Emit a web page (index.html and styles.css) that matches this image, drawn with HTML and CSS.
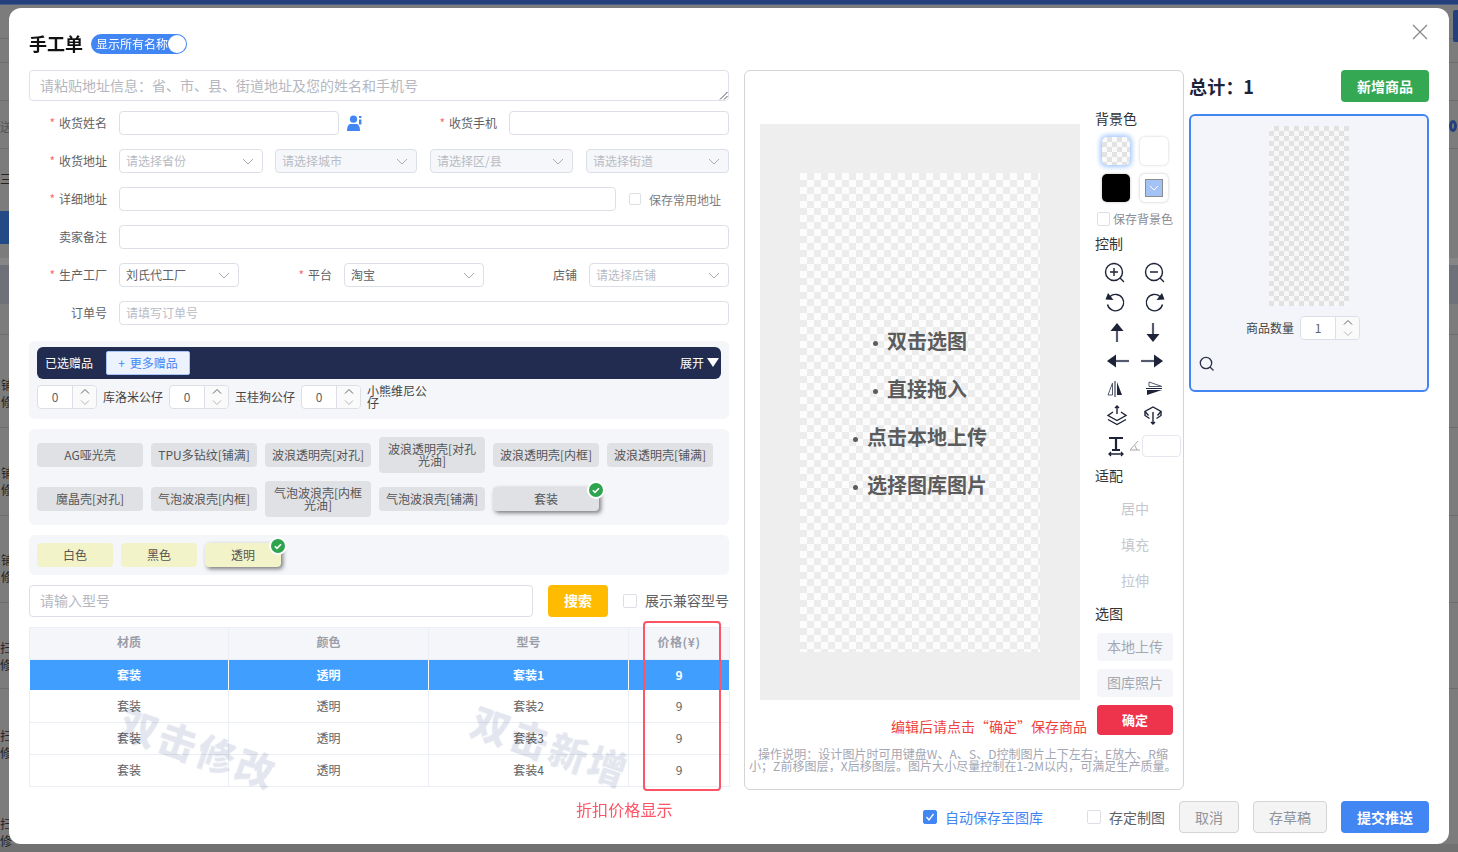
FILE: index.html
```html
<!DOCTYPE html>
<html lang="zh-CN">
<head>
<meta charset="utf-8">
<title>手工单</title>
<link rel="stylesheet" href="styles.css">
</head>
<body>
<div class="backdrop">
  <div class="bd-top"></div>
  <div class="bd-navy"></div>
  <div class="bd-band"></div>
  <div class="bd-line l1"></div><div class="bd-line l2"></div><div class="bd-line l3"></div><div class="bd-line l4"></div><div class="bd-line l5"></div><div class="bd-line l6"></div><div class="bd-line l7"></div><div class="bd-line l8"></div><div class="bd-line l9"></div>
  <span class="bd-txt t0">送</span><span class="bd-txt t00">三</span>
  <span class="bd-txt t1">铺<br>修</span><span class="bd-txt t2">铺<br>修</span><span class="bd-txt t3">铺<br>修</span>
  <span class="bd-txt t4">扫<br>修</span><span class="bd-txt t5">扫<br>修</span><span class="bd-txt t6">扫<br>修</span>
  <div class="bd-r-btn"></div><div class="bd-gear"></div>
</div>

<div class="modal">
  <header class="modal-head">
    <h1 class="title">手工单</h1>
    <div class="toggle"><span>显示所有名称</span><i class="knob"></i></div>
    <svg class="close" width="16" height="16" viewBox="0 0 16 16"><path d="M1 1l14 14M15 1L1 15" stroke="#8a8a8a" stroke-width="1.3" fill="none"/></svg>
  </header>

  <div class="modal-body">
    <section class="col-left">
      <div class="textarea">请粘贴地址信息：省、市、县、街道地址及您的姓名和手机号
        <svg class="grip" width="9" height="9" viewBox="0 0 9 9"><path d="M1 8.5L8.5 1M5 8.5L8.5 5" stroke="#555" stroke-width="1" fill="none"/></svg>
      </div>

      <div class="rows">
        <div class="row">
          <label class="lbl req">收货姓名</label>
          <div class="input w220"></div>
          <svg class="user-ic" width="16" height="16" viewBox="0 0 16 16"><circle cx="6.5" cy="4.2" r="3.6" fill="#4286f4"/><path d="M0 16c0-1 0-6 3-7h7c3 1 3 6 3 7z" fill="#4286f4"/><rect x="12" y="1" width="2.4" height="2" fill="#4286f4"/><rect x="12" y="4.5" width="2.4" height="5" fill="#4286f4"/></svg>
          <label class="lbl req w-phone">收货手机</label>
          <div class="input grow"></div>
        </div>
        <div class="row">
          <label class="lbl req">收货地址</label>
          <div class="select w144">请选择省份<svg class="chev" viewBox="0 0 12 7"><path d="M1 1l5 5 5-5" /></svg></div>
          <div class="select off w142 ml12">请选择城市<svg class="chev" viewBox="0 0 12 7"><path d="M1 1l5 5 5-5" /></svg></div>
          <div class="select off w143 ml13">请选择区/县<svg class="chev" viewBox="0 0 12 7"><path d="M1 1l5 5 5-5" /></svg></div>
          <div class="select off w143 ml13">请选择街道<svg class="chev" viewBox="0 0 12 7"><path d="M1 1l5 5 5-5" /></svg></div>
        </div>
        <div class="row">
          <label class="lbl req">详细地址</label>
          <div class="input w497"></div>
          <span class="check ml13"></span>
          <span class="chk-text ml8">保存常用地址</span>
        </div>
        <div class="row">
          <label class="lbl">卖家备注</label>
          <div class="input grow"></div>
        </div>
        <div class="row">
          <label class="lbl req">生产工厂</label>
          <div class="select val w120">刘氏代工厂<svg class="chev" viewBox="0 0 12 7"><path d="M1 1l5 5 5-5" /></svg></div>
          <label class="lbl req w-plat">平台</label>
          <div class="select val w140">淘宝<svg class="chev" viewBox="0 0 12 7"><path d="M1 1l5 5 5-5" /></svg></div>
          <label class="lbl w-shop">店铺</label>
          <div class="select grow">请选择店铺<svg class="chev" viewBox="0 0 12 7"><path d="M1 1l5 5 5-5" /></svg></div>
        </div>
        <div class="row">
          <label class="lbl">订单号</label>
          <div class="input ph grow">请填写订单号</div>
        </div>
      </div>

      <div class="panel gifts">
        <div class="gift-bar">
          <span class="picked">已选赠品</span>
          <span class="more">+ 更多赠品</span>
          <span class="expand">展开<svg width="12" height="9" viewBox="0 0 12 9"><path d="M0 0h12L6 9z" fill="#fff"/></svg></span>
        </div>
        <div class="gift-list">
          <div class="num"><b>0</b><span class="step"><svg viewBox="0 0 10 6"><path d="M1 5l4-4 4 4"/></svg><svg class="dim" viewBox="0 0 10 6"><path d="M1 1l4 4 4-4"/></svg></span></div>
          <span class="gift-name">库洛米公仔</span>
          <div class="num"><b>0</b><span class="step"><svg viewBox="0 0 10 6"><path d="M1 5l4-4 4 4"/></svg><svg class="dim" viewBox="0 0 10 6"><path d="M1 1l4 4 4-4"/></svg></span></div>
          <span class="gift-name">玉桂狗公仔</span>
          <div class="num"><b>0</b><span class="step"><svg viewBox="0 0 10 6"><path d="M1 5l4-4 4 4"/></svg><svg class="dim" viewBox="0 0 10 6"><path d="M1 1l4 4 4-4"/></svg></span></div>
          <span class="gift-name">小熊维尼公仔</span>
        </div>
      </div>

      <div class="panel materials">
        <span class="chip">AG哑光壳</span>
        <span class="chip">TPU多钻纹[铺满]</span>
        <span class="chip">波浪透明壳[对孔]</span>
        <span class="chip">波浪透明壳[对孔光油]</span>
        <span class="chip">波浪透明壳[内框]</span>
        <span class="chip">波浪透明壳[铺满]</span>
        <span class="chip">魔晶壳[对孔]</span>
        <span class="chip">气泡波浪壳[内框]</span>
        <span class="chip">气泡波浪壳[内框光油]</span>
        <span class="chip">气泡波浪壳[铺满]</span>
        <span class="chip on">套装<svg class="badge" viewBox="0 0 18 18"><circle cx="9" cy="9" r="8" fill="#2ea44f" stroke="#fff" stroke-width="2"/><path d="M5.8 9.2l2.2 2.2 4-4.2" stroke="#fff" stroke-width="1.6" fill="none"/></svg></span>
      </div>

      <div class="panel colors">
        <span class="chip yl">白色</span>
        <span class="chip yl">黑色</span>
        <span class="chip yl on">透明<svg class="badge" viewBox="0 0 18 18"><circle cx="9" cy="9" r="8" fill="#2ea44f" stroke="#fff" stroke-width="2"/><path d="M5.8 9.2l2.2 2.2 4-4.2" stroke="#fff" stroke-width="1.6" fill="none"/></svg></span>
      </div>

      <div class="search">
        <div class="input big">请输入型号</div>
        <button class="btn-search">搜索</button>
        <span class="check s14"></span>
        <span class="compat">展示兼容型号</span>
      </div>

      <div class="table-wrap">
        <table class="tbl">
          <colgroup><col class="c1"><col class="c2"><col class="c3"><col class="c4"></colgroup>
          <thead><tr><th>材质</th><th>颜色</th><th>型号</th><th class="price">价格(¥)</th></tr></thead>
          <tbody>
            <tr class="sel"><td>套装</td><td>透明</td><td>套装1</td><td>9</td></tr>
            <tr><td>套装</td><td>透明</td><td>套装2</td><td>9</td></tr>
            <tr><td>套装</td><td>透明</td><td>套装3</td><td>9</td></tr>
            <tr><td>套装</td><td>透明</td><td>套装4</td><td>9</td></tr>
          </tbody>
        </table>
        <span class="wm wm1">双击修改</span>
        <span class="wm wm2">双击新增</span>
        <div class="redbox"></div>
        <span class="rednote">折扣价格显示</span>
      </div>
    </section>

    <section class="col-mid">
      <div class="mid-top">
        <div class="canvas-col">
          <div class="canvas">
            <div class="sheet">
              <ul class="tips">
                <li>双击选图</li>
                <li>直接拖入</li>
                <li>点击本地上传</li>
                <li>选择图库图片</li>
              </ul>
            </div>
          </div>
          <p class="hint">编辑后请点击“确定”保存商品</p>
        </div>
        <div class="tools">
          <div class="t-label">背景色</div>
          <div class="swatches">
            <span class="sw sw-check"></span>
            <span class="sw sw-white"></span>
            <span class="sw sw-black"></span>
            <span class="sw sw-pick"><i><svg width="10" height="6" viewBox="0 0 10 6"><path d="M1 1l4 4 4-4" stroke="#fff" fill="none"/></svg></i></span>
          </div>
          <div class="save-bg"><span class="check"></span><span>保存背景色</span></div>
          <div class="t-label mt10">控制</div>
          <div class="icons">
            <svg viewBox="0 0 40 30"><circle cx="19" cy="14" r="8.5" class="s"/><path d="M25 20l4 4M15 14h8M19 10v8" class="s"/></svg>
            <svg viewBox="0 0 40 30"><circle cx="19" cy="14" r="8.5" class="s"/><path d="M25 20l4 4M15 14h8" class="s"/></svg>
            <svg viewBox="0 0 40 30"><path d="M15 8.500a8.200 8.200 0 1 1-2.500 8" class="s"/><path d="M18.500 12L10.500 11.500l2.500-6.500z" class="f"/></svg>
            <svg viewBox="0 0 40 30"><path d="M25 8.500a8.200 8.200 0 1 0 2.500 8" class="s"/><path d="M21.500 12l8-.5-2.500-6.500z" class="f"/></svg>
            <svg viewBox="0 0 40 29"><path d="M22 9v15" stroke="#555a6e" stroke-width="2.200"/><path d="M15.500 13L22 5l6.500 8z" class="f"/></svg>
            <svg viewBox="0 0 40 29"><path d="M18 5v15" stroke="#555a6e" stroke-width="2.200"/><path d="M11.500 16h13L18 24z" class="f"/></svg>
            <svg viewBox="0 0 40 28"><path d="M18 14h16" stroke="#555a6e" stroke-width="2.200"/><path d="M12 14l9-6.500v13z" class="f"/></svg>
            <svg viewBox="0 0 40 28"><path d="M6 14h16" stroke="#555a6e" stroke-width="2.200"/><path d="M28 14l-9-6.500v13z" class="f"/></svg>
            <svg viewBox="0 0 40 27"><path d="M20 6v16" stroke="#1d2338" stroke-width="1"/><path d="M17.500 8L13 20h4.500z" fill="none" stroke="#555a6e" stroke-width="1"/><path d="M22 7l5 13h-5z" class="f"/></svg>
            <svg viewBox="0 0 40 27"><path d="M11 13.500h16" stroke="#1d2338" stroke-width="1"/><path d="M14 11.500V7l13 4.500z" fill="none" stroke="#555a6e" stroke-width="1"/><path d="M12 15h15l-15 5z" class="f"/></svg>
            <svg viewBox="0 0 40 27"><path d="M22 4v8M20 6l2-2 2 2" class="s"/><path d="M18 10l-5 3.500 9 5 9-5-5-3.500" class="s"/><path d="M13 17.500l9 5 9-5" class="s"/></svg>
            <svg viewBox="0 0 40 27"><path d="M18 10v12M16 20l2 2 2-2" class="s"/><path d="M13.500 13.500L10 9.500 18 5l8 4.500-3.500 4" class="s"/><path d="M10 10v3.500l4.500 3M26 10v3.500l-4.500 3" class="s"/></svg>
          </div>
          <div class="t-row">
            <svg width="34" height="22" viewBox="0 0 34 22"><path d="M6 3h14M13 3v12M9 15h8" stroke="#1d2338" stroke-width="2.200" fill="none"/><path d="M6 19h14M8 17l-2 2 2 2M18 17l2 2-2 2" stroke="#1d2338" stroke-width="1.300" fill="none"/></svg>
            <svg class="ang" width="12" height="14" viewBox="0 0 12 14"><path d="M9 2L1 11h10M6 6.500l2 4.500" stroke="#a8a8a8" fill="none"/></svg>
            <span class="t-input"></span>
          </div>
          <div class="t-label mt11">适配</div>
          <div class="fit">
            <span>居中</span><span>填充</span><span>拉伸</span>
          </div>
          <div class="t-label mt11">选图</div>
          <div class="pick">
            <span class="p-btn">本地上传</span>
            <span class="p-btn">图库照片</span>
            <span class="p-ok">确定</span>
          </div>
        </div>
      </div>
      <p class="oper">操作说明：设计图片时可用键盘W、A、S、D控制图片上下左右；E放大、R缩小；Z前移图层，X后移图层。图片大小尽量控制在1-2M以内，可满足生产质量。</p>
    </section>

    <section class="col-right">
      <div class="right-head">
        <strong>总计： 1</strong>
        <button class="btn-add">新增商品</button>
      </div>
      <div class="card">
        <div class="thumb"></div>
        <div class="qty">
          <span>商品数量</span>
          <div class="num"><b>1</b><span class="step"><svg viewBox="0 0 10 6"><path d="M1 5l4-4 4 4"/></svg><svg class="dim" viewBox="0 0 10 6"><path d="M1 1l4 4 4-4"/></svg></span></div>
        </div>
        <svg class="zoom" width="16" height="16" viewBox="0 0 16 16"><circle cx="7" cy="7" r="5.700" fill="none" stroke="#2b3044" stroke-width="1.300"/><path d="M11 11l3.500 3.500" stroke="#2b3044" stroke-width="1.300"/></svg>
      </div>
    </section>
  </div>

  <footer class="modal-foot">
    <span class="check blue"><svg width="14" height="14" viewBox="0 0 14 14"><path d="M3.500 7l2.500 3 4.500-6" stroke="#fff" stroke-width="1.300" fill="none"/></svg></span>
    <span class="auto">自动保存至图库</span>
    <span class="check s14 ml44"></span>
    <span class="custom">存定制图</span>
    <button class="btn-ghost w60">取消</button>
    <button class="btn-ghost w74">存草稿</button>
    <button class="btn-main">提交推送</button>
  </footer>
</div>
</body>
</html>
```

FILE: styles.css
```css
* { box-sizing: border-box; }
html, body { margin: 0; height: 100%; overflow: hidden; }
body {
  padding: 8px 9px;
  background: #7a7a7a;
  font-family: "Noto Sans CJK SC", "Liberation Sans", sans-serif;
  font-size: 12px;
  color: #606266;
}

/* dimmed page lying behind the dialog */
.backdrop { position: fixed; inset: 0; overflow: hidden; background: linear-gradient(#7c7c7c 0 844px, #717171 844px); }
.bd-top { position: absolute; left: 0; right: 0; top: 0; height: 5px; background: linear-gradient(#24407c 0 4px, #6b7a94); }
.bd-navy { position: absolute; left: 0; width: 9px; height: 33px; background: #244a85; top: 211px; }
.bd-band { position: absolute; left: 0; right: 0; top: 258px; height: 46px; background: linear-gradient(#868686 0 7px, #6f7178 7px); }
.bd-line { position: absolute; left: 0; right: 0; height: 1px; background: #6c6c6c; }
.l1 { top: 38px; } .l2 { top: 62px; } .l3 { top: 100px; } .l4 { top: 148px; } .l5 { top: 334px; } .l6 { top: 427px; } .l7 { top: 515px; } .l8 { top: 602px; } .l9 { top: 688px; }
.bd-txt { position: absolute; left: 1px; font-size: 12px; line-height: 17px; color: #222; }
.t0 { top: 118px; color: #555; left: 0; }
.t00 { top: 170px; left: 0; }
.t1 { top: 376px; } .t2 { top: 464px; } .t3 { top: 551px; } .t4 { top: 639px; left: 0; } .t5 { top: 727px; left: 0; } .t6 { top: 815px; left: 0; }
.bd-r-btn { position: absolute; right: 0; top: 10px; width: 5px; height: 32px; background: #24407c; border-radius: 2px 0 0 2px; }
.bd-gear { position: absolute; left: 1449px; top: 120px; width: 8px; height: 12px; border-radius: 50%; border: 3px solid #24407c; }

/* dialog */
.modal {
  position: relative;
  width: 1440px; height: 836px;
  background: #fff;
  border-radius: 12px;
  padding: 0 20px;
  display: flex; flex-direction: column;
}
.modal-head { height: 62px; display: flex; align-items: center; gap: 8px; padding-top: 10px; flex: none; position: relative; }
.title { margin: -2px 0 0; font-size: 18px; font-weight: 700; color: #111; line-height: 24px; }
.toggle { width: 96px; height: 20px; border-radius: 10px; background: #4286f4; color: #fff; display: flex; align-items: center; padding: 0 1px 0 5px; justify-content: space-between; }
.toggle span { font-size: 12px; line-height: 20px; white-space: nowrap; }
.knob { width: 18px; height: 18px; border-radius: 50%; background: #fff; flex: none; }
.close { position: absolute; right: 1px; top: 16px; }

.modal-body { display: flex; height: 720px; flex: none; }
.col-left { width: 700px; flex: none; }
.col-mid { width: 440px; flex: none; margin-left: 15px; border: 1px solid #d4d4d4; border-radius: 6px; }
.col-right { width: 240px; flex: none; margin-left: 5px; }

.textarea { position: relative; height: 31px; border: 1px solid #dfe1ea; border-radius: 4px; padding: 0 10px; font-size: 14px; line-height: 29px; color: #b4b7bf; }
.grip { position: absolute; right: 0; bottom: 0; }

.rows { margin-top: 10px; display: flex; flex-direction: column; gap: 14px; }
.row { display: flex; align-items: center; height: 24px; }
.lbl { width: 78px; flex: none; text-align: right; margin-right: 12px; white-space: nowrap; font-size: 12px; line-height: 24px; color: #606266; }
.req::before { content: "*"; color: #f56c6c; margin-right: 4px; }
.input, .select { height: 24px; border: 1px solid #dcdfe6; border-radius: 4px; background: #fff; flex: none; }
.grow { flex: 1 1 auto; }
.w220 { width: 220px; }
.w497 { width: 497px; }
.user-ic { margin-left: 8px; flex: none; }
.w-phone { width: 134px; margin-left: 0; }
.select { position: relative; padding-left: 6px; line-height: 22px; color: #b9bcc4; }
.select.val { color: #606266; }
.select.off { background: #f5f7fa; }
.w144 { width: 144px; } .w143 { width: 143px; } .w142 { width: 142px; } .w120 { width: 120px; } .w140 { width: 140px; }
.chev { position: absolute; right: 8px; top: 8px; width: 12px; height: 7px; fill: none; stroke: #a8abb2; stroke-width: 1; }
.w-plat { width: 93px; }
.w-shop { width: 93px; }
.check { display: inline-block; width: 12px; height: 12px; border: 1px solid #dcdfe6; border-radius: 2px; background: #fff; flex: none; }
.check.s14 { width: 14px; height: 14px; }
.ml12 { margin-left: 12px; } .ml13 { margin-left: 13px; } .ml8 { margin-left: 8px; }
.chk-text { font-size: 12px; color: #7b7e86; white-space: nowrap; }

.panel { background: #f5f6fa; border-radius: 6px; margin-top: 10px; padding: 8px; }
.gifts { margin-top: 16px; height: 78px; padding: 6px 8px; }
.gift-bar { height: 32px; border-radius: 6px; background: #222c50; color: #fff; display: flex; align-items: center; padding: 0 2px 0 8px; gap: 13px; line-height: 16px; }
.picked { margin-top: -1px; }
.more { width: 84px; height: 24px; background: #ecf3ff; border: 1px solid #a6c6fb; border-radius: 2px; color: #4286f4; line-height: 22px; text-align: center; word-spacing: 2px; }
.expand { margin-left: auto; margin-top: -1px; display: flex; align-items: center; gap: 3px; }
.gift-list { margin-top: 6px; display: flex; align-items: center; }
.num { display: flex; width: 60px; height: 24px; background: #fff; border: 1px solid #dcdfe6; border-radius: 4px; flex: none; }
.num b { flex: 1; text-align: center; font-weight: 400; line-height: 22px; color: #606266; }
.step { width: 24px; border-left: 1px solid #dcdfe6; display: flex; flex-direction: column; background: #fafafa; border-radius: 0 4px 4px 0; }
.step svg { flex: 1; width: 10px; height: 11px; margin: 0 auto; fill: none; stroke: #606266; stroke-width: 1; min-height: 0; }
.step svg.dim { stroke: #b4b7bf; }
.gift-name { width: 60px; margin: 0 6px; font-size: 12px; line-height: 12px; color: #444; flex: none; }

.materials { display: flex; flex-wrap: wrap; gap: 8px; height: 96px; align-items: center; align-content: flex-start; }
.chip { position: relative; width: 106px; min-height: 24px; background: #e0e1e5; border-radius: 4px; display: flex; align-items: center; justify-content: center; text-align: center; font-size: 12px; line-height: 12px; padding: 6px 8px; color: #555; white-space: normal; }
.materials .chip { padding: 6px 4px; }
.chip.on { box-shadow: 2px 2px 4px rgba(0,0,0,.5); }
.badge { position: absolute; right: -6px; top: -6px; width: 18px; height: 18px; }
.colors { display: flex; gap: 8px; height: 40px; align-items: center; }
.yl { width: 76px; background: #f2f3c8; color: #555; }

.search { margin-top: 10px; display: flex; align-items: center; height: 32px; }
.big { width: 504px; height: 32px; font-size: 14px; padding: 0 10px; line-height: 28px; color: #b4b7bf; }
.ph { padding-left: 6px; color: #b9bcc4; line-height: 22px; }
.btn-search { width: 60px; height: 32px; margin-left: 15px; padding: 0 0 2px; border: 0; border-radius: 4px; background: #ffbb00; color: #fff; font: 700 14px "Noto Sans CJK SC", sans-serif; }
.search .check { margin-left: 15px; }
.compat { margin-left: 8px; margin-top: -2px; font-size: 14px; color: #606266; white-space: nowrap; }

.table-wrap { position: relative; margin-top: 10px; }
.tbl { width: 700px; border-collapse: collapse; table-layout: fixed; }
.c1 { width: 199px; } .c2, .c3 { width: 200px; } .c4 { width: 101px; }
.tbl th, .tbl td { border: 1px solid #ebeef5; text-align: center; font-size: 12px; padding: 0 0 1px; height: 32px; line-height: 14px; }
.tbl th { background: #f5f6fa; color: #9a9ea8; font-weight: 700; padding-bottom: 3px; }
.price { letter-spacing: .6px; }
.tbl td { color: #606266; }
.tbl tr.sel td { height: 31px; padding-bottom: 0; background: #409eff; color: #fff; font-weight: 700; border-color: #fff; border-top-color: #ebeef5; }
.wm { position: absolute; width: 164px; color: #e3e6ee; font-size: 38px; font-weight: 900; line-height: 40px; white-space: nowrap; transform: rotate(19deg); pointer-events: none; mix-blend-mode: multiply; letter-spacing: 3px; }
.wm1 { left: 88px; top: 100px; }
.wm2 { left: 440px; top: 98px; }
.redbox { position: absolute; left: 614px; top: -6px; width: 78px; height: 170px; border: 2px solid #ff5366; border-radius: 4px; }
.rednote { position: absolute; left: 547px; top: 170px; font-size: 16px; line-height: 24px; color: #ff5366; white-space: nowrap; letter-spacing: .1px; }

/* editor */
.mid-top { display: flex; }
.canvas-col { width: 350px; padding: 53px 0 0 15px; flex: none; }
.canvas { width: 320px; height: 576px; background: #eee; padding: 49px 40px 48px; }
.sheet {
  height: 479px; display: flex; flex-direction: column; justify-content: flex-end;
  background-color: #fcfcfc;
  background-image: linear-gradient(45deg, #ececec 25%, transparent 25%, transparent 75%, #ececec 75%), linear-gradient(45deg, #ececec 25%, transparent 25%, transparent 75%, #ececec 75%);
  background-size: 14px 14px; background-position: 0 0, 7px 7px;
}
.tips { margin: 0 0 143px; padding: 0; list-style: none; font-size: 20px; font-weight: 700; line-height: 48px; color: #5c5c5c; text-align: center; }
.tips li::before { content: ""; display: inline-block; width: 5px; height: 5px; border-radius: 50%; background: #5c5c5c; margin-right: 9px; vertical-align: middle; }
.hint { margin: 17px 8px 0 0; text-align: right; font-size: 14px; line-height: 18px; color: #f0423c; white-space: nowrap; }

.tools { width: 88px; padding-top: 40px; flex: none; }
.t-label { font-size: 14px; line-height: 14px; height: 16px; color: #333; }
.mt10 { margin-top: 10px; } .mt11 { margin-top: 11px; }
.swatches { margin: 10px 0 0 7px; display: grid; grid-template-columns: 28px 28px; column-gap: 10px; row-gap: 9px; }
.sw { width: 28px; height: 28px; border-radius: 5px; display: block; }
.sw-check {
  background-color: #fafafa;
  background-image: linear-gradient(45deg, #e2e2e2 25%, transparent 25%, transparent 75%, #e2e2e2 75%), linear-gradient(45deg, #e2e2e2 25%, transparent 25%, transparent 75%, #e2e2e2 75%);
  background-size: 10px 10px; background-position: 0 0, 5px 5px;
  box-shadow: 0 0 5px 2px #a3c8ff;
}
.sw-white { background: #fff; box-shadow: 0 0 3px rgba(0,0,0,.2); }
.sw-black { background: #000; box-shadow: 0 0 3px rgba(0,0,0,.25); }
.sw-pick { background: #fff; box-shadow: 0 0 3px rgba(0,0,0,.25); display: flex; align-items: center; justify-content: center; }
.sw-pick i { width: 18px; height: 18px; background: #a4c3f5; border: 1px solid #8c8c8c; display: flex; align-items: center; justify-content: center; }
.save-bg { margin: 10px 0 0 2px; display: flex; align-items: center; gap: 3px; font-size: 12px; line-height: 14px; color: #8a8d95; white-space: nowrap; }
.save-bg .check { width: 13px; height: 14px; }
.icons { margin-top: 6px; display: grid; grid-template-columns: 40px 40px; grid-template-rows: 30px 30px 29px 28px 27px 27px; }
.icons svg { width: 40px; height: 100%; display: block; }
.s { fill: none; stroke: #1d2338; stroke-width: 1.400; }
.f { fill: #1d2338; }
.t-row { margin-top: 6px; height: 22px; display: flex; align-items: center; position: relative; }
.t-row svg:first-child { margin-left: 8px; flex: none; margin-right: -8px; }
.ang { flex: none; margin-right: 1px; }
.t-input { width: 39px; height: 22px; border: 1px solid #e4e7ed; border-radius: 4px; flex: none; }
.fit { margin: 11px 0 0 2px; width: 76px; display: flex; flex-direction: column; gap: 8px; }
.fit span { height: 28px; line-height: 26px; text-align: center; font-size: 14px; color: #c4c7cd; }
.pick { margin: 11px 0 0 2px; width: 76px; display: flex; flex-direction: column; gap: 8px; }
.p-btn { height: 28px; line-height: 26px; text-align: center; font-size: 14px; border-radius: 4px; background: #f5f6fa; color: #a5a8b0; }
.p-ok { height: 30px; line-height: 30px; text-align: center; font-size: 13px; font-weight: 700; border-radius: 4px; background: #ee334c; color: #fff; }
.oper { margin: 13px 4px 0; text-indent: 9px; font-size: 12px; line-height: 12px; color: #a3a7b3; letter-spacing: .06px; }

/* preview */
.right-head { height: 32px; display: flex; align-items: center; justify-content: space-between; }
.right-head strong { font-size: 18px; color: #1d2338; font-weight: 700; word-spacing: -5px; letter-spacing: .3px; }
.btn-add { width: 88px; height: 32px; border: 0; border-radius: 4px; background: #34a853; color: #fff; font: 700 14px "Noto Sans CJK SC", sans-serif; padding: 0 0 1px; }
.card { position: relative; margin-top: 12px; height: 278px; border: 2px solid #4286f4; border-radius: 6px; background: #f4f5fa; padding-top: 10px; }
.thumb {
  width: 80px; height: 180px; margin: 0 auto;
  background-color: #f7f7f7;
  background-image: linear-gradient(45deg, #e2e2e2 25%, transparent 25%, transparent 75%, #e2e2e2 75%), linear-gradient(45deg, #e2e2e2 25%, transparent 25%, transparent 75%, #e2e2e2 75%);
  background-size: 10px 10px; background-position: 0 0, 5px 5px;
}
.qty { margin: 10px 0 0 55px; display: flex; align-items: center; gap: 6px; font-size: 12px; color: #444; line-height: 14px; }
.qty > span { margin-top: -1px; }
.zoom { position: absolute; left: 8px; top: 240px; }

/* footer */
.modal-foot { height: 32px; margin-top: 11px; display: flex; align-items: center; justify-content: flex-end; flex: none; }
.check.blue { width: 14px; height: 14px; background: #4286f4; border-color: #4286f4; position: relative; }
.check.blue svg { position: absolute; left: -1px; top: -1px; }
.auto { margin-left: 8px; font-size: 14px; color: #4286f4; white-space: nowrap; }
.ml44 { margin-left: 44px; }
.custom { margin-left: 8px; font-size: 14px; color: #606266; white-space: nowrap; }
.btn-ghost { height: 32px; margin-left: 14px; background: #f4f4f5; border: 1px solid #d3d4d6; border-radius: 4px; color: #909399; font: 14px "Noto Sans CJK SC", sans-serif; }
.w60 { width: 60px; } .w74 { width: 74px; }
.btn-main { width: 88px; height: 32px; margin-left: 14px; border: 0; border-radius: 4px; background: #4286f4; color: #fff; font: 700 14px "Noto Sans CJK SC", sans-serif; }
```
